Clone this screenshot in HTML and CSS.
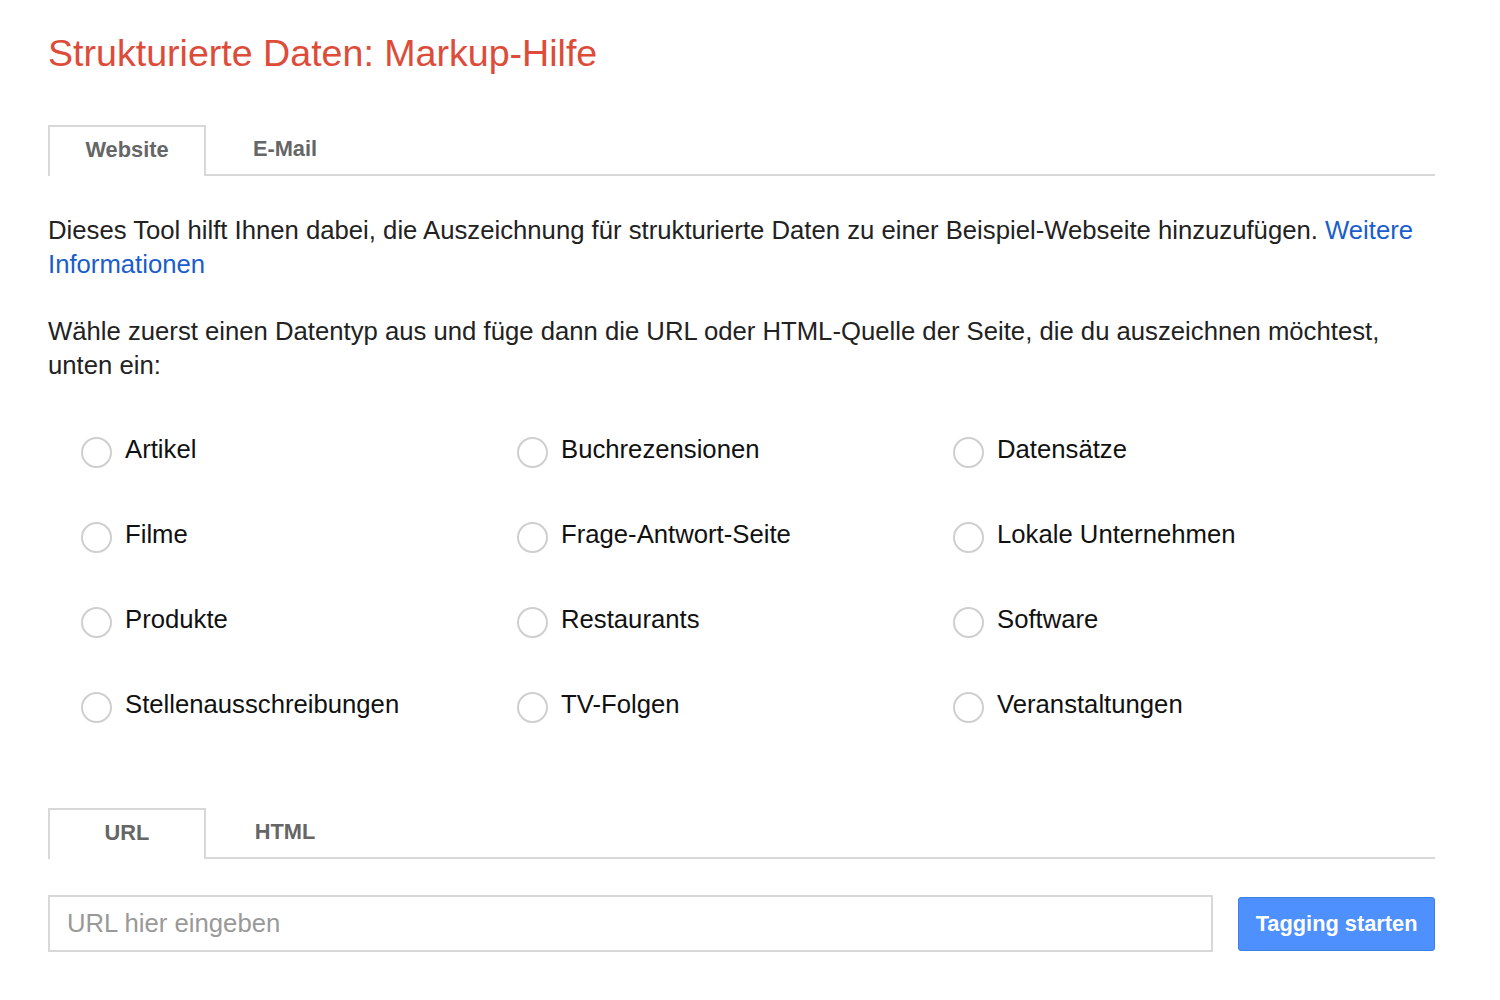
FILE: index.html
```html
<!DOCTYPE html>
<html lang="de">
  <head>
    <meta charset="utf-8">
    <title>Strukturierte Daten: Markup-Hilfe</title>
    <link rel="stylesheet" href="styles.css">
  </head>
  <body>
    <div id="wrapper">

      <h1 class="title">Strukturierte Daten: Markup-Hilfe</h1>

      <div class="tabs">
        <div class="tab active">Website</div>
        <div class="tab">E-Mail</div>
      </div>

      <p class="intro">Dieses Tool hilft Ihnen dabei, die Auszeichnung für strukturierte Daten zu einer Beispiel-Webseite hinzuzufügen. <a href="#">Weitere Informationen</a></p>

      <p class="intro">Wähle zuerst einen Datentyp aus und füge dann die URL oder HTML-Quelle der Seite, die du auszeichnen möchtest, unten ein:</p>

      <div class="types">
        <label class="type"><span class="radio"></span>Artikel</label>
        <label class="type"><span class="radio"></span>Buchrezensionen</label>
        <label class="type"><span class="radio"></span>Datensätze</label>
        <label class="type"><span class="radio"></span>Filme</label>
        <label class="type"><span class="radio"></span>Frage-Antwort-Seite</label>
        <label class="type"><span class="radio"></span>Lokale Unternehmen</label>
        <label class="type"><span class="radio"></span>Produkte</label>
        <label class="type"><span class="radio"></span>Restaurants</label>
        <label class="type"><span class="radio"></span>Software</label>
        <label class="type"><span class="radio"></span>Stellenausschreibungen</label>
        <label class="type"><span class="radio"></span>TV-Folgen</label>
        <label class="type"><span class="radio"></span>Veranstaltungen</label>
      </div>

      <div class="tabs source">
        <div class="tab active">URL</div>
        <div class="tab">HTML</div>
      </div>

      <div class="urlrow">
        <input class="url" placeholder="URL hier eingeben">
        <button class="bStart" type="button">Tagging starten</button>
      </div>

    </div>
  </body>
</html>
```

FILE: styles.css
```css
body         {  margin: 0;  background: #fff;  font-family: "Liberation Sans", Arial, sans-serif;  color: #222;  }
#wrapper     {  width: 1387px;  margin: 0 0 0 48px;  padding-top: 30px;  }
.title       {  margin: 0;  font-size: 37.6px;  font-weight: normal;  color: #dd4b39;  line-height: 46px;  }

.tabs        {  display: flex;  margin-top: 49px;  border-bottom: 2px solid #d8d8d8;  height: 49px;  }
.tab         {  width: 158px;  box-sizing: border-box;  text-align: center;  font-size: 21.8px;  font-weight: bold;  color: #666;  line-height: 47px;  }
.tab.active  {  border: 2px solid #d8d8d8;  border-bottom: none;  background: #fff;  margin-bottom: -2px;  height: 51px;  line-height: 45px;  }

.intro       {  margin: 37px 0 0 0;  font-size: 25.7px;  line-height: 34px;  color: #222;  }
.intro a     {  color: #1a5dcc;  text-decoration: none;  }
.intro + .intro {  margin-top: 33px;  }

.types       {  display: grid;  grid-template-columns: 436px 436px 436px;  grid-auto-rows: 85px;  margin: 49px 0 0 33px;  }
.type        {  display: flex;  align-items: center;  height: 36px;  font-size: 25.7px;  color: #111;  }
.radio       {  width: 27px;  height: 27px;  border: 2px solid #cfcfcf;  border-radius: 50%;  margin: 6px 13px 0 0;  flex: none;  }

.source      {  margin-top: 37px;  }

.urlrow      {  display: flex;  align-items: center;  margin-top: 36px;  gap: 25px;  }
.url         {  width: 1166px;  height: 57px;  box-sizing: border-box;  border: 2px solid #d8d8d8;  padding: 0 17px;  font-family: inherit;  font-size: 25.7px;  color: #222;  outline: none;  }
.url::placeholder {  color: #999;  }
.bStart      {  width: 197px;  height: 54px;  border: 1px solid #3d7fe6;  border-radius: 3px;  background: #4d90fe;  color: #fff;  font-family: inherit;  font-size: 21.8px;  font-weight: bold;  }
```
